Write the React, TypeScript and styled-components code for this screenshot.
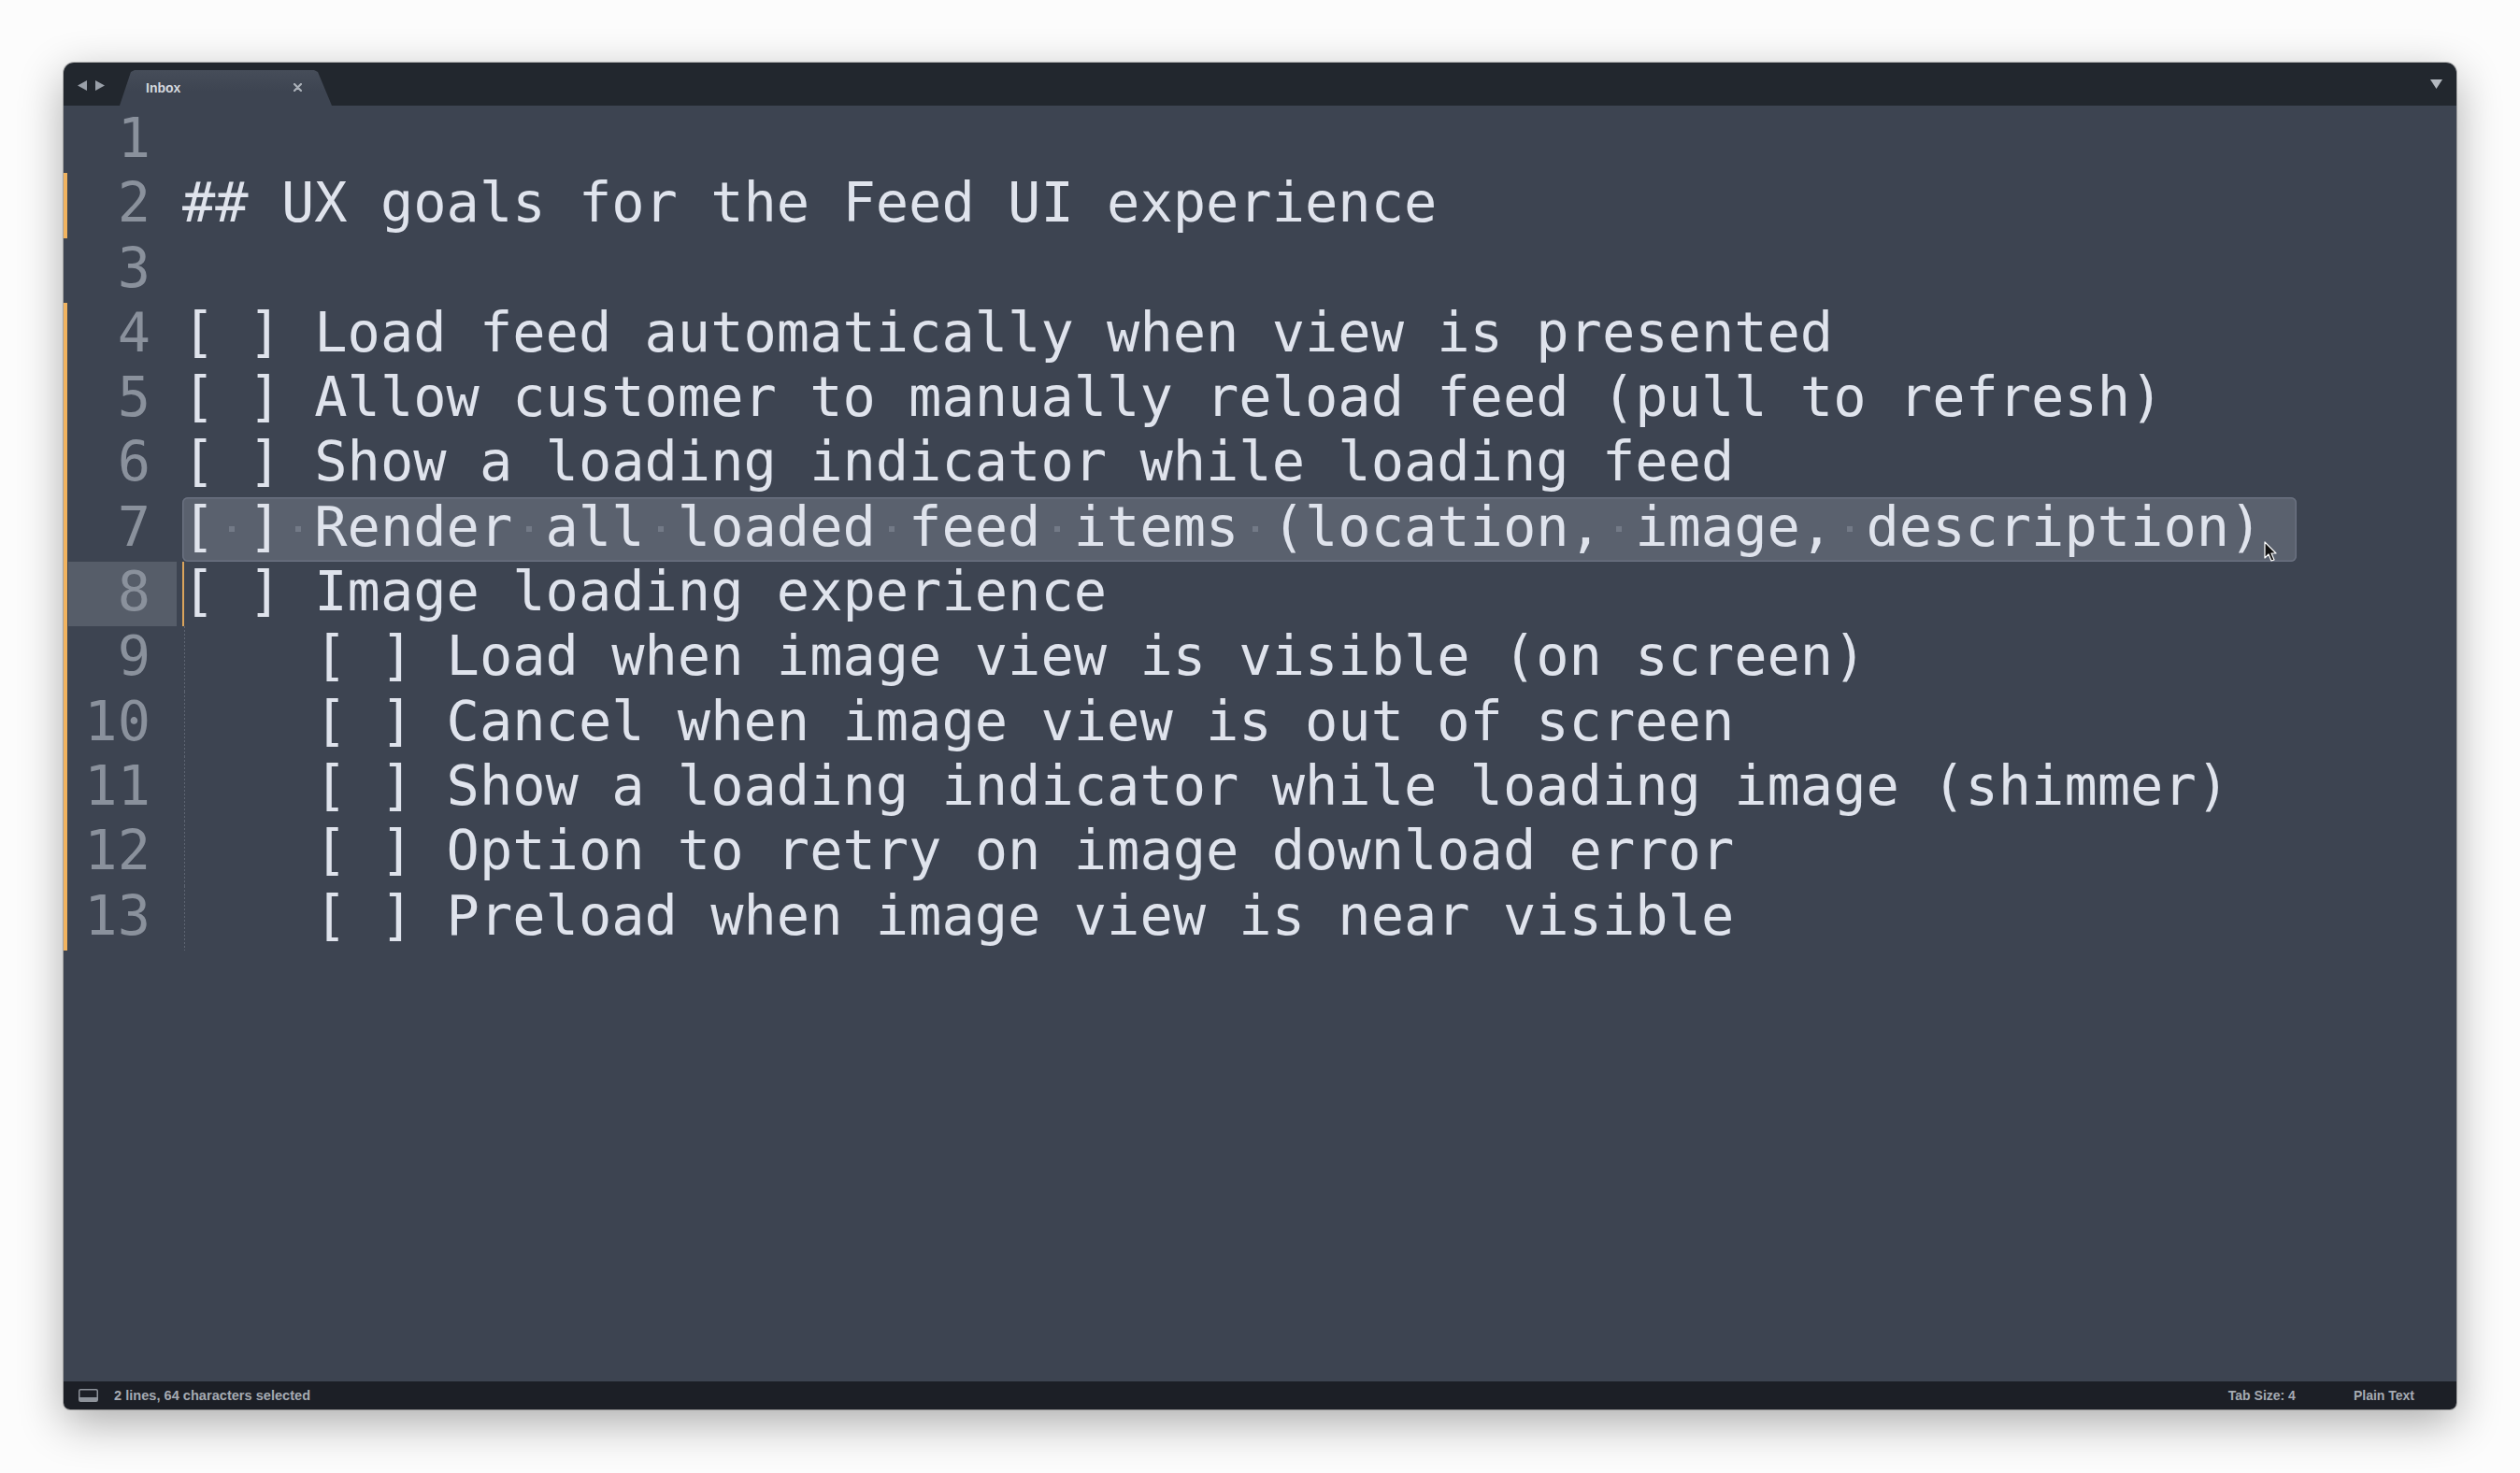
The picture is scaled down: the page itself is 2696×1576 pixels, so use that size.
import React from "react";
import styled, { createGlobalStyle } from "styled-components";

const LINE = 69.3;

const GlobalStyle = createGlobalStyle`
  html, body { margin: 0; padding: 0; }
  body { background: #fcfcfc; font-family: "Liberation Sans", Arial, sans-serif; }
`;

const Page = styled.div`
  width: 2696px;
  height: 1576px;
  box-sizing: border-box;
  padding: 67px 0 0 68px;
  background: #fcfcfc;
  overflow: hidden;
`;

const Window = styled.div`
  width: 2560px;
  height: 1441px;
  display: flex;
  flex-direction: column;
  border-radius: 11px 11px 7px 7px;
  overflow: hidden;
  box-shadow: 0 14px 48px rgba(0, 0, 0, 0.32), 0 0 0 1px rgba(0, 0, 0, 0.22);
`;

const TabBar = styled.div`
  height: 46px;
  flex: none;
  display: flex;
  align-items: flex-end;
  background: #22272e;
`;

const Nav = styled.div`
  width: 60px;
  box-sizing: border-box;
  padding-left: 15px;
  align-self: center;
  margin-top: 4px;
  display: flex;
`;

const Tab = styled.div`
  width: 227px;
  height: 38px;
  flex: none;
  box-sizing: border-box;
  padding: 0 32px 1px 28px;
  display: flex;
  align-items: center;
  justify-content: space-between;
  background: linear-gradient(#464d59, #3d4451 60%);
  clip-path: polygon(12px 2px, 16px 0, 208px 0, 212px 2px, 227px 38px, 0 38px);
  color: #d4d8df;
  font: bold 14px "Liberation Sans", Arial, sans-serif;
`;

const Dropdown = styled.div`
  margin-left: auto;
  align-self: center;
  padding-right: 15px;
  display: flex;
`;

const Editor = styled.div`
  flex: 1;
  position: relative;
  background: #3d4451;
  padding-top: 3px;
  font-family: "DejaVu Sans Mono", Menlo, monospace;
  font-size: 58.68px;
`;

const Line = styled.div`
  display: flex;
  height: ${LINE}px;
`;

const Gutter = styled.div<{ $modified: boolean }>`
  width: 127px;
  flex: none;
  box-sizing: border-box;
  border-left: 4px solid ${(p) => (p.$modified ? "#f1b35f" : "transparent")};
  padding-left: 1px;
`;

const LineNumber = styled.div<{ $active: boolean }>`
  width: 116px;
  height: 100%;
  box-sizing: border-box;
  padding-right: 28px;
  text-align: right;
  line-height: 65px;
  color: #8a919c;
  background: ${(p) => (p.$active ? "#565d69" : "transparent")};
`;

const Code = styled.div<{ $caret: boolean; $guide: boolean }>`
  position: relative;
  flex: 1;
  white-space: pre;
  line-height: 65px;
  color: #dfe3ec;

  &::before {
    content: "";
    display: ${(p) => (p.$caret ? "block" : "none")};
    position: absolute;
    left: 0;
    top: 0;
    width: 2px;
    height: ${LINE}px;
    background: #dba45c;
  }

  &::after {
    content: "";
    display: ${(p) => (p.$guide ? "block" : "none")};
    position: absolute;
    left: 2px;
    top: 0;
    width: 1px;
    height: ${LINE}px;
    background-image: linear-gradient(to bottom, #5e6572 50%, transparent 50%);
    background-size: 1px 4px;
  }
`;

const Selection = styled.span`
  display: inline-block;
  height: ${LINE}px;
  vertical-align: top;
  width: calc(64ch + 1px);
  background: #5a616e;
  border-radius: 6px;
  box-shadow: inset 0 0 0 1.5px #6a7180;
`;

const Space = styled.span`
  display: inline-block;
  width: 1ch;
  height: 65px;
  vertical-align: top;
  background: linear-gradient(#737a87, #737a87) no-repeat;
  background-size: 6px 6px;
  background-position: center 31px;
`;

const Pointer = styled.svg`
  position: absolute;
  left: 2354px;
  top: 466px;
`;

const StatusBar = styled.div`
  height: 30px;
  flex: none;
  display: flex;
  align-items: center;
  box-sizing: border-box;
  padding: 0 45px 0 16px;
  background: #1c1f26;
  color: #a5aab2;
  font: bold 14px "Liberation Sans", Arial, sans-serif;
`;

const StatusIcon = styled.svg`
  margin-right: 17px;
  flex: none;
`;

const SelectionInfo = styled.span`
  font-size: 14.6px;
`;

const StatusRight = styled.div`
  margin-left: auto;
  display: flex;
  gap: 62px;
`;

type LineData = { text: string; modified: boolean; selected?: boolean; caret?: boolean; guide?: boolean };

const lines: LineData[] = [
  { text: "", modified: false },
  { text: "## UX goals for the Feed UI experience", modified: true },
  { text: "", modified: false },
  { text: "[ ] Load feed automatically when view is presented", modified: true },
  { text: "[ ] Allow customer to manually reload feed (pull to refresh)", modified: true },
  { text: "[ ] Show a loading indicator while loading feed", modified: true },
  { text: "[ ] Render all loaded feed items (location, image, description)", modified: true, selected: true },
  { text: "[ ] Image loading experience", modified: true, caret: true },
  { text: "    [ ] Load when image view is visible (on screen)", modified: true, guide: true },
  { text: "    [ ] Cancel when image view is out of screen", modified: true, guide: true },
  { text: "    [ ] Show a loading indicator while loading image (shimmer)", modified: true, guide: true },
  { text: "    [ ] Option to retry on image download error", modified: true, guide: true },
  { text: "    [ ] Preload when image view is near visible", modified: true, guide: true },
];

function SelectedText({ text }: { text: string }) {
  const parts = text.split(" ");
  return (
    <Selection>
      {parts.map((p, i) => (
        <React.Fragment key={i}>
          {p}
          {i < parts.length - 1 && <Space />}
        </React.Fragment>
      ))}
    </Selection>
  );
}

export default function App() {
  return (
    <>
      <GlobalStyle />
      <Page>
        <Window>
          <TabBar>
            <Nav>
              <svg width="30" height="12" viewBox="0 0 30 12">
                <polygon points="10,0 10,11 0,5.5" fill="#9aa0a9" />
                <polygon points="19,0 19,11 29,5.5" fill="#9aa0a9" />
              </svg>
            </Nav>
            <Tab>
              <span>Inbox</span>
              <svg width="9" height="9" viewBox="0 0 9 9">
                <path d="M1 1 L8 8 M8 1 L1 8" stroke="#aab0b8" strokeWidth="2.2" strokeLinecap="round" />
              </svg>
            </Tab>
            <Dropdown>
              <svg width="13" height="10" viewBox="0 0 13 10">
                <polygon points="0,0 13,0 6.5,10" fill="#b3b8bf" />
              </svg>
            </Dropdown>
          </TabBar>
          <Editor>
            {lines.map((l, i) => (
              <Line key={i}>
                <Gutter $modified={l.modified}>
                  <LineNumber $active={!!l.caret}>{i + 1}</LineNumber>
                </Gutter>
                <Code $caret={!!l.caret} $guide={!!l.guide}>
                  {l.selected ? <SelectedText text={l.text} /> : l.text}
                </Code>
              </Line>
            ))}
            <Pointer width="16" height="24" viewBox="0 0 16 24">
              <path d="M1 1 L1 18 L5 14 L8 21 L11 20 L8 13 L13 13 Z" fill="#111" stroke="#fff" strokeWidth="1.2" strokeLinejoin="round" />
            </Pointer>
          </Editor>
          <StatusBar>
            <StatusIcon width="21" height="14" viewBox="0 0 21 14">
              <rect x="0.75" y="0.75" width="19.5" height="12.5" rx="1.5" fill="none" stroke="#8d929a" strokeWidth="1.5" />
              <rect x="1" y="9" width="19" height="4" fill="#8d929a" />
            </StatusIcon>
            <SelectionInfo>2 lines, 64 characters selected</SelectionInfo>
            <StatusRight>
              <span>Tab Size: 4</span>
              <span>Plain Text</span>
            </StatusRight>
          </StatusBar>
        </Window>
      </Page>
    </>
  );
}
